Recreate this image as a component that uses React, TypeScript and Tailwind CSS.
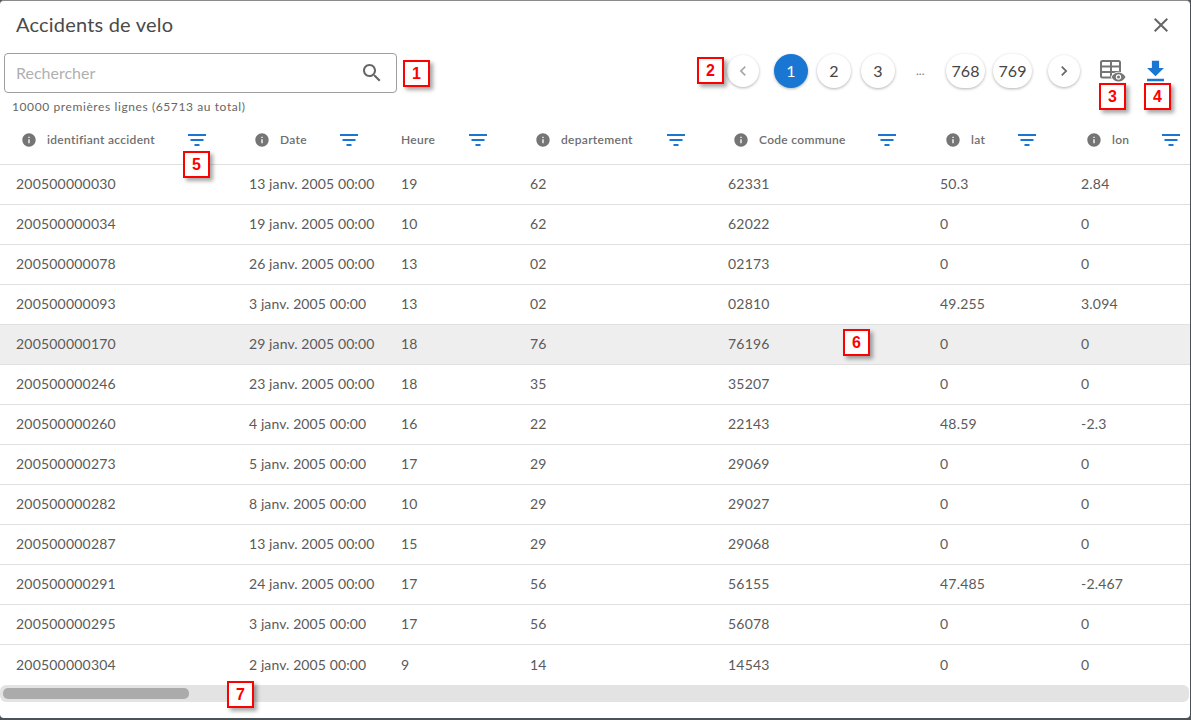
import { ReactNode } from 'react'

const FONT = "font-['Lato','Noto_Sans',sans-serif]"

const GRID = 'grid grid-cols-[233px_152px_129px_198px_212px_141px_143px] w-[1208px]'

const COLUMNS = [
  { name: 'identifiant accident', info: true, pr: 'pr-[27px]' },
  { name: 'Date', info: true, pr: 'pr-[27px]' },
  { name: 'Heure', info: false, pr: 'pr-[27px]' },
  { name: 'departement', info: true, pr: 'pr-[27px]' },
  { name: 'Code commune', info: true, pr: 'pr-[28px]' },
  { name: 'lat', info: true, pr: 'pr-[29px]' },
  { name: 'lon', info: true, pr: 'pr-[28px]' },
]

const ROWS = [
  ['200500000030', '13 janv. 2005 00:00', '19', '62', '62331', '50.3', '2.84'],
  ['200500000034', '19 janv. 2005 00:00', '10', '62', '62022', '0', '0'],
  ['200500000078', '26 janv. 2005 00:00', '13', '02', '02173', '0', '0'],
  ['200500000093', '3 janv. 2005 00:00', '13', '02', '02810', '49.255', '3.094'],
  ['200500000170', '29 janv. 2005 00:00', '18', '76', '76196', '0', '0'],
  ['200500000246', '23 janv. 2005 00:00', '18', '35', '35207', '0', '0'],
  ['200500000260', '4 janv. 2005 00:00', '16', '22', '22143', '48.59', '-2.3'],
  ['200500000273', '5 janv. 2005 00:00', '17', '29', '29069', '0', '0'],
  ['200500000282', '8 janv. 2005 00:00', '10', '29', '29027', '0', '0'],
  ['200500000287', '13 janv. 2005 00:00', '15', '29', '29068', '0', '0'],
  ['200500000291', '24 janv. 2005 00:00', '17', '56', '56155', '47.485', '-2.467'],
  ['200500000295', '3 janv. 2005 00:00', '17', '56', '56078', '0', '0'],
  ['200500000304', '2 janv. 2005 00:00', '9', '14', '14543', '0', '0'],
]

const InfoIcon = () => (
  <svg width="16" height="16" viewBox="0 0 24 24" className="shrink-0 fill-[#757575]">
    <path d="M12 2C6.48 2 2 6.48 2 12s4.48 10 10 10 10-4.48 10-10S17.52 2 12 2zm1 15h-2v-6h2v6zm0-8h-2V7h2v2z" />
  </svg>
)

const FilterIcon = () => (
  <svg width="18" height="12" viewBox="0 0 18 12" className="shrink-0 fill-[#1976d2]">
    <rect x="0" y="0" width="18" height="2" />
    <rect x="2.500" y="5" width="13" height="2" />
    <rect x="6.500" y="10" width="5" height="2" />
  </svg>
)

const TableEyeIcon = () => (
  <svg width="26" height="22" viewBox="0 0 26 22" className="shrink-0">
    <rect x="1" y="1" width="19" height="16.500" rx="1.500" className="fill-none stroke-[#757575] stroke-2" />
    <path d="M1 6.500h19M1 12h19M11 1v16" className="fill-none stroke-[#757575] stroke-2" />
    <path
      d="M11.500 17c1.800-3 4-4.500 7-4.500s5.200 1.500 7 4.500c-1.800 3-4 4.500-7 4.500s-5.200-1.500-7-4.500z"
      className="fill-[#757575] stroke-white stroke-[1.500] [paint-order:stroke]"
    />
    <circle cx="18.500" cy="17" r="2.700" className="fill-white" />
    <circle cx="18.500" cy="17" r="1.500" className="fill-[#757575]" />
  </svg>
)

const PageButton = ({ children, className }: { children: ReactNode; className: string }) => (
  <div className={`flex items-center justify-center rounded-full shadow-[0_1px_3px_rgba(0,0,0,0.3)] ${className}`}>
    {children}
  </div>
)

const Badge = ({ n, className }: { n: number; className: string }) => (
  <div
    className={`absolute flex h-[27px] w-[27px] items-center justify-center border-2 border-[#ff0000] bg-white font-['Liberation_Sans',sans-serif] text-[16px] font-bold text-[#ff0000] shadow-[3px_3px_4px_rgba(0,0,0,0.35)] ${className}`}
  >
    {n}
  </div>
)

export default function App() {
  return (
    <div className={`relative h-[720px] w-[1191px] overflow-hidden bg-[#4b5258] ${FONT}`}>
      <div className="flex h-[718px] w-[1190px] flex-col overflow-hidden rounded-[4px] border-t border-[#8a8a8a] bg-white text-[#5a5a5a]">
        {/* title */}
        <div className="flex h-[52px] shrink-0 items-start justify-between pr-[17px] pl-[16px]">
          <h1 className="pt-[10px] text-[20px] leading-[26px] tracking-[0.2px] text-[#4a4a4a]">Accidents de velo</h1>
          <svg width="24" height="24" viewBox="0 0 24 24" className="mt-[12px] fill-[#666666]">
            <path d="M19 6.410 17.590 5 12 10.590 6.410 5 5 6.410 10.590 12 5 17.590 6.410 19 12 13.410 17.590 19 19 17.590 13.410 12z" />
          </svg>
        </div>

        {/* toolbar */}
        <div className="flex h-[40px] shrink-0 items-center pr-[20px] pl-[4px]">
          <div className="flex h-[40px] w-[393px] items-center justify-between rounded-[4px] border border-[#9e9e9e] pr-[12px] pl-[11px]">
            <span className="text-[16px] text-[#b0b0b0]">Rechercher</span>
            <svg width="24" height="24" viewBox="0 0 24 24" className="fill-[#666666]">
              <path d="M15.500 14h-.79l-.28-.27C15.410 12.590 16 11.110 16 9.500 16 5.910 13.090 3 9.500 3S3 5.910 3 9.500 5.910 16 9.500 16c1.610 0 3.090-.59 4.230-1.570l.27.28v.79l5 4.990L20.490 19l-4.990-5zm-6 0C7.010 14 5 11.990 5 9.500S7.010 5 9.500 5 14 7.010 14 9.500 11.990 14 9.500 14z" />
            </svg>
          </div>
          <div className="mb-[4px] ml-auto flex items-center text-[16px] text-[#444444]">
            <PageButton className="h-[32px] w-[32px]">
              <svg width="20" height="20" viewBox="0 0 24 24" className="fill-[#a8a8a8]">
                <path d="M15.410 7.410 14 6l-6 6 6 6 1.410-1.410L10.830 12z" />
              </svg>
            </PageButton>
            <PageButton className="ml-[15px] h-[34px] w-[34px] bg-[#1976d2] text-white">1</PageButton>
            <PageButton className="ml-[9px] h-[34px] w-[34px]">2</PageButton>
            <PageButton className="ml-[10px] h-[34px] w-[34px]">3</PageButton>
            <span className="ml-[21px] w-[10px] text-[12px] text-[#777777]">...</span>
            <PageButton className="ml-[20px] h-[34px] w-[39px]">768</PageButton>
            <PageButton className="ml-[8px] h-[34px] w-[39px]">769</PageButton>
            <PageButton className="ml-[16px] h-[32px] w-[32px]">
              <svg width="20" height="20" viewBox="0 0 24 24" className="fill-[#666666]">
                <path d="M10 6 8.590 7.410 13.170 12l-4.580 4.590L10 18l6-6z" />
              </svg>
            </PageButton>
            <div className="ml-[20px]">
              <TableEyeIcon />
            </div>
            <svg width="29" height="29" viewBox="0 0 24 24" className="ml-[15px] fill-[#1976d2]">
              <path d="M19 9h-4V3H9v6H5l7 7 7-7zM5 18v2h14v-2H5z" />
            </svg>
          </div>
        </div>

        <p className="mt-[6px] h-[16px] shrink-0 pl-[12px] text-[12px] leading-[16px] tracking-[0.6px] text-[#666666]">
          10000 premières lignes (65713 au total)
        </p>

        {/* table */}
        <div className="mt-[5px] min-h-0 w-full overflow-hidden">
          <div className={`${GRID} h-[45px] border-b border-[#e0e0e0]`}>
            {COLUMNS.map(col => (
              <div key={col.name} className={`flex h-[40px] items-center ${col.info ? 'pl-[21px]' : 'pl-[16px]'} ${col.pr}`}>
                {col.info && <InfoIcon />}
                <span className={`text-[12px] font-semibold tracking-[0.3px] text-[#6e6e6e] ${col.info ? 'ml-[10px]' : ''}`}>{col.name}</span>
                <span className="ml-auto">
                  <FilterIcon />
                </span>
              </div>
            ))}
          </div>
          {ROWS.map((row, i) => (
            <div
              key={row[0]}
              className={`${GRID} h-[40px] items-center text-[14px] tracking-[0.2px] ${i === 4 ? 'bg-[#eeeeee]' : ''} ${i < ROWS.length - 1 ? 'border-b border-[#e0e0e0]' : ''}`}
            >
              {row.map((cell, j) => (
                <div key={j} className={`pb-[2px] pl-[16px] ${j === 1 ? 'tracking-[0.1px]' : ''}`}>
                  {cell}
                </div>
              ))}
            </div>
          ))}
        </div>

        {/* horizontal scrollbar */}
        <div className="flex h-[17px] w-[1189px] shrink-0 items-center rounded-[6px] bg-[#e3e3e3] pl-[3px]">
          <div className="h-[11px] w-[186px] rounded-[5px] bg-[#ababab]" />
        </div>
      </div>

      <Badge n={1} className="top-[60px] left-[403px]" />
      <Badge n={2} className="top-[57px] left-[697px]" />
      <Badge n={3} className="top-[83px] left-[1099px]" />
      <Badge n={4} className="top-[83px] left-[1144px]" />
      <Badge n={5} className="top-[151px] left-[183px]" />
      <Badge n={6} className="top-[329px] left-[843px]" />
      <Badge n={7} className="top-[681px] left-[227px]" />
    </div>
  )
}
